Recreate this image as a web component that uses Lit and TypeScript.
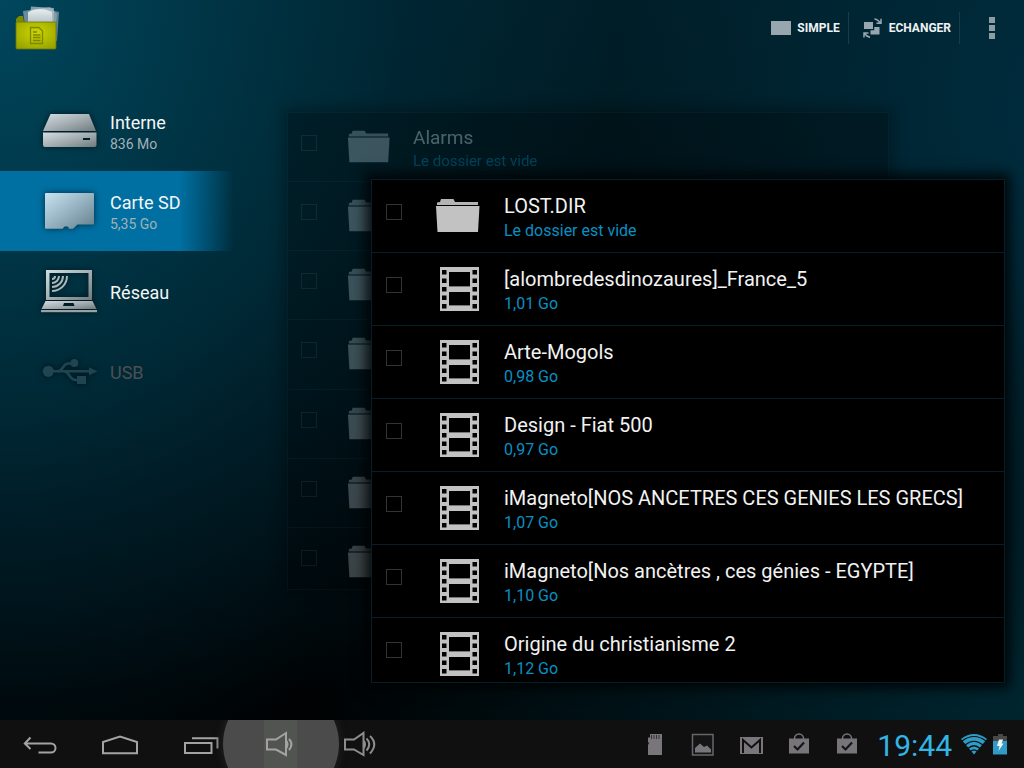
import { LitElement, html, svg, css, nothing } from "lit";
import { customElement, property, state } from "lit/decorators.js";
import { classMap } from "lit/directives/class-map.js";

interface Entry {
  kind: "folder" | "video";
  name: string;
  info: string;
}

interface Place {
  id: string;
  name: string;
  info?: string;
  disabled?: boolean;
}

const PLACES: Place[] = [
  { id: "drive", name: "Interne", info: "836 Mo" },
  { id: "card", name: "Carte SD", info: "5,35 Go" },
  { id: "network", name: "Réseau" },
  { id: "usb", name: "USB", disabled: true },
];

const CARD_FILES: Entry[] = [
  { kind: "folder", name: "LOST.DIR", info: "Le dossier est vide" },
  { kind: "video", name: "[alombredesdinozaures]_France_5", info: "1,01 Go" },
  { kind: "video", name: "Arte-Mogols", info: "0,98 Go" },
  { kind: "video", name: "Design - Fiat 500", info: "0,97 Go" },
  { kind: "video", name: "iMagneto[NOS ANCETRES CES GENIES LES GRECS]", info: "1,07 Go" },
  { kind: "video", name: "iMagneto[Nos ancètres , ces génies - EGYPTE]", info: "1,10 Go" },
  { kind: "video", name: "Origine du christianisme 2", info: "1,12 Go" },
];

const INTERNAL_FILES: Entry[] = [
  { kind: "folder", name: "Alarms", info: "Le dossier est vide" },
  ...Array.from({ length: 6 }, (): Entry => ({ kind: "folder", name: "", info: "" })),
];

const folderIcon = html`<svg class="icon" viewBox="0 0 48 48" aria-hidden="true">
  <path fill="#b4b4b4" d="M3 13V10.5L6 10L7 7H19.500L21 10H44V13Z" />
  <path fill="#c2c2c2" d="M2 14H45.500L44 40H3.500Z" />
</svg>`;

const holes = [5, 13.5, 22, 30.500, 39];
const videoIcon = html`<svg class="icon" viewBox="0 0 48 48" aria-hidden="true">
  <rect x="6" y="2" width="39" height="44" fill="#c2c2c2" />
  ${holes.map(
    (y) => svg`<rect x="8" y=${y} width="4.500" height="4.500" /><rect x="38.500" y=${y} width="4.500" height="4.500" />`
  )}
  <rect x="15" y="7" width="21" height="15" fill="#777" />
  <rect x="15" y="27" width="21" height="14" fill="#777" />
  <rect x="15" y="7" width="21" height="14" />
  <rect x="15" y="27" width="21" height="13" />
</svg>`;

const metal = svg`<defs>
  <linearGradient id="metal" x1="0" y1="0" x2="1" y2="1">
    <stop offset="0" stop-color="#d3dde1" />
    <stop offset="0.500" stop-color="#a5afb3" />
    <stop offset="1" stop-color="#6f7a7e" />
  </linearGradient>
  <linearGradient id="glass" x1="0" y1="0" x2="1" y2="1">
    <stop offset="0" stop-color="#c8e2f0" />
    <stop offset="0.500" stop-color="#97b3c1" />
    <stop offset="1" stop-color="#647f8c" />
  </linearGradient>
</defs>`;

const placeIcons: Record<string, unknown> = {
  drive: html`<svg class="icon" viewBox="0 0 58 48" aria-hidden="true">
    ${metal}
    <path fill="url(#metal)" d="M10.500 7H49L56 24H3Z" />
    <path fill="url(#metal)" fill-rule="evenodd" d="M3 25.500H56.500V38Q56.500 40 54.500 40H5Q3 40 3 38ZM43 31V33H50V31Z" />
  </svg>`,
  card: html`<svg class="icon" viewBox="0 0 58 48" aria-hidden="true">
    ${metal}
    <path fill="url(#glass)" d="M6 6H53Q54 6 54 7V36.500Q54 37.500 53 37.500H37.500L33 41.800H29L28 39.500H24.500L22.500 41.800H6Q5 41.800 5 40.800V7Q5 6 6 6Z" />
  </svg>`,
  network: html`<svg class="icon" viewBox="0 0 58 48" aria-hidden="true">
    ${metal}
    <path fill="url(#metal)" fill-rule="evenodd" d="M6 3H52V33H6ZM9.500 6V30H48.500V6Z" />
    <path fill="url(#metal)" fill-rule="evenodd" d="M5.500 34H52.500L56.500 42H1.500ZM24 36L23 39H34.500L33.500 36Z" />
    <rect x="1" y="43" width="56" height="2.200" fill="#98a3a7" />
    <g fill="none" stroke="#aab6ba" stroke-width="2">
      <path d="M27 9A15 15 0 0 1 12 24" /><path d="M23 9A11 11 0 0 1 12 20" />
      <path d="M19 9A7 7 0 0 1 12 16" /><path d="M15 9A3 3 0 0 1 12 12" />
    </g>
  </svg>`,
  usb: html`<svg class="icon" viewBox="0 0 58 48" aria-hidden="true">
    <g fill="#1f4452" stroke="none">
      <circle cx="8.300" cy="24.300" r="5.600" /><circle cx="34.300" cy="16" r="4" />
      <rect x="37" y="29" width="9" height="8" /><path d="M49 20.300L57.500 24.300L49 28.300Z" />
    </g>
    <g fill="none" stroke="#1f4452" stroke-width="2.600">
      <path d="M10 24.300H50" /><path d="M18 24.300C23 24 23 16.500 28 16.500H33" />
      <path d="M24 24.300C30 25 29 33 36 33H38" />
    </g>
  </svg>`,
};

/** A list of files shown as a floating sheet. */
@customElement("file-panel")
export class FilePanel extends LitElement {
  @property({ attribute: false }) entries: Entry[] = [];
  @property() label = "";
  @property({ type: Boolean, reflect: true }) receded = false;

  static styles = css`
    :host {
      display: block;
      min-width: 0;
      min-height: 0;
      box-sizing: border-box;
      border: 1px solid #061e28;
      background: #000;
      box-shadow: 0 0 12px 5px rgba(0, 0, 0, 0.85);
      overflow: hidden;
      --row: 73px;
      --icon: 48px;
    }
    :host([receded]) {
      opacity: 0.3;
      --icon: 46px;
    }
    .list {
      list-style: none;
      margin: 0;
      padding: 0;
      display: grid;
      grid-auto-rows: var(--row);
    }
    :host([receded]) .list {
      height: calc(100% + 8px);
      grid-auto-rows: 1fr;
    }
    .row {
      display: flex;
      align-items: center;
      box-sizing: border-box;
      min-width: 0;
      padding-left: 14px;
      border-bottom: 1px solid #061e28;
    }
    :host([receded]) .row {
      padding-left: 13px;
    }
    .tick {
      appearance: none;
      flex: none;
      box-sizing: border-box;
      width: 16px;
      height: 16px;
      margin: 0 32px 8px 0;
      border: 1px solid #333;
      background: transparent;
    }
    :host([receded]) .tick {
      margin-right: 29px;
    }
    .tick:checked {
      background: #0099cc;
    }
    .entry {
      display: flex;
      align-items: center;
      gap: 22px;
      min-width: 0;
    }
    :host([receded]) .entry {
      gap: 21px;
    }
    .icon {
      flex: none;
      width: var(--icon);
      height: var(--icon);
    }
    .text {
      display: grid;
      gap: 1px;
      min-width: 0;
      padding-top: 3px;
      white-space: nowrap;
    }
    .name {
      font-size: 20px;
      line-height: 26px;
      color: #f2f2f2;
      overflow: hidden;
      text-overflow: ellipsis;
    }
    .info {
      font-size: 16px;
      line-height: 22px;
      color: #0890c3;
    }
    :host([receded]) .text {
      padding-top: 1px;
    }
    :host([receded]) .name {
      font-size: 19px;
      line-height: 25px;
    }
    :host([receded]) .info {
      font-size: 15px;
      line-height: 20px;
    }
  `;

  render() {
    return html`<ul class="list" aria-label=${this.label}>
      ${this.entries.map(
        (entry, i) => html`<li class="row">
          <input class="tick" type="checkbox" id="e${i}" aria-label=${entry.name || "Dossier"} />
          <label class="entry" for="e${i}">
            ${entry.kind === "folder" ? folderIcon : videoIcon}
            <span class="text">
              <span class="name">${entry.name}</span>
              <span class="info">${entry.info}</span>
            </span>
          </label>
        </li>`
      )}
    </ul>`;
  }
}

/** The system bar with navigation keys, notifications and clock. */
@customElement("system-bar")
export class SystemBar extends LitElement {
  static styles = css`
    :host {
      display: flex;
      justify-content: space-between;
      height: 48px;
      background: #101010;
      overflow: hidden;
    }
    .keys,
    .status {
      display: flex;
      align-items: center;
    }
    .status {
      padding-right: 16px;
    }
    .key {
      position: relative;
      width: 80px;
      height: 48px;
      padding: 3px 0 0;
      border: 0;
      background: none;
      display: grid;
      place-items: center;
    }
    .pressed::before {
      content: "";
      position: absolute;
      width: 116px;
      height: 116px;
      left: -17px;
      top: -34px;
      border-radius: 50%;
      background: linear-gradient(to right, #4b4b4b 41px, #525451 41px 74px, #4b4b4b 74px);
      box-shadow: 0 0 6px 3px #1b1d1a;
    }
    .key svg {
      position: relative;
      width: 40px;
      height: 32px;
      fill: none;
      stroke: #a3a3a3;
      stroke-width: 2;
    }
    .notice {
      width: 48px;
      height: 32px;
    }
    .clock {
      margin-left: 6px;
      font-size: 30px;
      line-height: 48px;
      padding-top: 3px;
      color: #33b5e5;
    }
    .wifi {
      width: 28px;
      height: 32px;
      margin-left: 8px;
    }
    .battery {
      width: 16px;
      height: 32px;
      margin-left: 4px;
    }
  `;

  private bag() {
    return html`<svg class="notice" viewBox="0 0 48 32" aria-hidden="true">
      <path d="M19.500 12V10.500A4.500 4.500 0 0 1 28.500 10.500V12" fill="none" stroke="#77757a" stroke-width="1.500" />
      <rect x="14" y="10.500" width="20" height="15" fill="#77757a" />
      <path d="M19 18L22.500 21.500L29 14.500" fill="none" stroke="#151515" stroke-width="2.200" />
    </svg>`;
  }

  render() {
    return html`
      <nav class="keys">
        <button class="key" aria-label="Retour">
          <svg viewBox="0 0 40 32">
            <path d="M5 13.500H31A4.500 4.500 0 0 1 31 22.500H18.500M10.500 7.500L4.800 13.500L10.500 19" />
          </svg>
        </button>
        <button class="key" aria-label="Accueil">
          <svg viewBox="0 0 40 32"><path d="M3 23.300V12L20 6.500L37 12V23.300Z" /></svg>
        </button>
        <button class="key" aria-label="Applications récentes">
          <svg viewBox="0 0 40 32"><path d="M5 13H31.500V23H5ZM12 8.200H37.500V18.500" /></svg>
        </button>
        <button class="key pressed" aria-label="Baisser le volume">
          <svg viewBox="0 0 40 32">
            <path d="M7 9.500H16L26 3V25L16 19.500H7Z" />
            <path d="M26.500 11Q28.500 14 26.500 18M29 9Q34 14 29 20" />
          </svg>
        </button>
        <button class="key" aria-label="Augmenter le volume">
          <svg viewBox="0 0 40 32" opacity="0.85">
            <path d="M5 9.500H14L23.500 3V25L14 19.500H5Z" />
            <path d="M24 11Q26 14 24 18M26.500 8.500Q32 14 26.500 20.500M30 6Q38.500 14 30 23.500" />
          </svg>
        </button>
      </nav>
      <div class="status">
        <svg class="notice" viewBox="0 0 48 32" aria-hidden="true">
          <path d="M19 6H31V27H17V17L18 15L17 14V9.500H19Z" fill="#78767a" />
          <path d="M20.500 7V11M23 7V11M25.500 7V11M28 7V11" stroke="#333" stroke-width="1" />
        </svg>
        <svg class="notice" viewBox="0 0 48 32" aria-hidden="true">
          <rect x="13.500" y="6.500" width="20.500" height="20.500" fill="#151515" stroke="#68666a" stroke-width="1.500" />
          <path d="M16 24.500V20L21 15.500L25 19L28 17.500L32 21.500V24.500Z" fill="#78767a" />
        </svg>
        <svg class="notice" viewBox="0 0 48 32" aria-hidden="true">
          <rect x="13" y="9" width="23" height="17" fill="#78767a" />
          <path d="M16 25V12L24.500 19.500L33 12V25" fill="none" stroke="#101010" stroke-width="2" />
        </svg>
        ${this.bag()} ${this.bag()}
        <time class="clock">19:44</time>
        <svg class="wifi" viewBox="0 0 28 32" aria-hidden="true">
          <path d="M14 26.500L1 11Q14 1 27 11Z" fill="#2e9cc6" />
          <g fill="none" stroke="#101010" stroke-width="1.200">
            <path d="M2 13Q14 4 26 13M5 17Q14 9.500 23 17M8 20.500Q14 15 20 20.500M10.500 23.500Q14 20 17.500 23.500" />
          </g>
        </svg>
        <svg class="battery" viewBox="0 0 16 32" aria-hidden="true">
          <path d="M6 6H11V8H15V13H1V8H6Z" fill="#484848" />
          <rect x="1" y="13" width="14" height="13.500" fill="#2e9cc6" />
          <path d="M7 11.500H11L9.500 15.500H11.500L6.500 23L7.500 18H5Z" fill="#f4f4f4" />
        </svg>
      </div>
    `;
  }
}

@customElement("app-root")
export class AppRoot extends LitElement {
  @state() private selected = "card";

  static styles = css`
    :host {
      display: flex;
      flex-direction: column;
      height: 100vh;
      overflow: hidden;
      font-family: Roboto, "Liberation Sans", sans-serif;
      background:
        radial-gradient(ellipse 60% 105% at 0% 0%, #00465c 0%, rgba(0, 58, 76, 0.8) 35%, rgba(0, 46, 62, 0.5) 65%, rgba(0, 40, 54, 0) 100%),
        radial-gradient(ellipse 45% 70% at 105% 15%, #002d3f 0%, rgba(0, 45, 63, 0) 100%),
        radial-gradient(ellipse 75% 45% at 105% 90%, #002833 0%, rgba(0, 31, 42, 0) 100%),
        linear-gradient(#001e28 0%, #001a22 30%, #000a0e 65%, #000203 90%);
    }
    .header {
      display: flex;
      align-items: center;
      height: 56px;
      padding: 0 12px 0 12px;
    }
    .logo {
      width: 48px;
      height: 48px;
      margin-right: auto;
    }
    .action {
      display: flex;
      align-items: center;
      height: 32px;
      gap: 6px;
      padding: 0 8px 0 14px;
      border: 0;
      border-right: 1px solid #1b3b47;
      background: none;
      font: 700 12px/16px Roboto, "Liberation Sans", sans-serif;
      color: #eef2f3;
    }
    .more {
      width: 40px;
      height: 40px;
      margin-left: 12px;
      padding: 2px 0 0;
      border: 0;
      background: none;
    }
    .main {
      flex: 1;
      min-height: 0;
      display: flex;
    }
    .places {
      flex: none;
      width: 234px;
      padding-top: 35px;
    }
    .place {
      display: flex;
      align-items: center;
      gap: 12px;
      width: 100%;
      height: 80px;
      padding: 0 0 0 40px;
      border: 0;
      background: none;
      font-family: inherit;
      text-align: left;
      color: #f4f6f7;
    }
    .place.current {
      background: linear-gradient(to right, #006fa1 0 180px, rgba(0, 111, 161, 0) 234px);
    }
    .place:disabled {
      color: #4b5053;
    }
    .place .icon {
      width: 58px;
      height: 48px;
      filter: drop-shadow(0 0 3px rgba(0, 0, 0, 0.6));
    }
    .caption {
      display: grid;
      padding-top: 3px;
    }
    .title {
      font-size: 18px;
      line-height: 22px;
    }
    .size {
      font-size: 14px;
      line-height: 20px;
      color: #a3b1b7;
    }
    .stage {
      flex: 1;
      min-width: 0;
      display: grid;
      grid-template-columns: 84px minmax(0, 1fr) 116px;
      grid-template-rows: 67px minmax(0, 1fr) 93px;
      padding: 56px 19px 37px 53px;
    }
    .back {
      grid-area: 1 / 1 / 3 / 3;
    }
    .front {
      grid-area: 2 / 2 / 4 / 4;
      z-index: 1;
    }
  `;

  render() {
    return html`
      <header class="header">
        <svg class="logo" viewBox="0 0 48 48" role="img" aria-label="Gestionnaire de fichiers">
          <defs>
            <radialGradient id="lime" cx="0.5" cy="0.4" r="0.8">
              <stop offset="0" stop-color="#cdd600" /><stop offset="1" stop-color="#8f9a00" />
            </radialGradient>
            <linearGradient id="paper" x1="0" y1="0" x2="0" y2="1">
              <stop offset="0" stop-color="#e8eef0" /><stop offset="1" stop-color="#aab9bf" />
            </linearGradient>
          </defs>
          <path d="M30 4L47 8L45 37L38 35Z" fill="#7f9aa5" opacity="0.75" />
          <path d="M11 7L38 3L45 10L42 34L14 30Z" fill="#93aab3" opacity="0.7" />
          <path d="M19 2.500L42 4L41 30H16Z" fill="#b6c6cc" opacity="0.7" />
          <path d="M16 8Q28 2 40 8V22H16Z" fill="url(#paper)" />
          <path d="M4 18V15L7 12H11L12 18Z" fill="#7d8a00" />
          <rect x="4" y="18" width="40" height="27" rx="1" fill="url(#lime)" stroke="#6d7600" stroke-width="0.800" />
          <g fill="none" stroke="#7d8700" stroke-width="1.300">
            <path d="M18.500 23.500H27L30.500 27V39.500H18.500Z" />
            <path d="M21 28H25M21 31H28.500M21 33.500H28.500M21 36.500H28.500" />
          </g>
        </svg>
        <button class="action">
          <svg width="20" height="14" aria-hidden="true"><rect width="20" height="14" fill="#98a7ad" /></svg>
          SIMPLE
        </button>
        <button class="action">
          <svg width="20" height="20" viewBox="0 0 20 20" aria-hidden="true">
            <g fill="#98a7ad">
              <rect x="1" y="4" width="9" height="7" />
              <path d="M11.200 9H16.500V16.500H7.500V12.200H11.200Z" />
            </g>
            <g fill="none" stroke="#98a7ad" stroke-width="1.500">
              <path d="M11.500 0.800Q15 1.500 17 4.500M18 0.800V5.300H13.500" />
              <path d="M7 19.300Q3.500 18.500 1.500 15.500M1 19.500V15H5.500" />
            </g>
          </svg>
          ECHANGER
        </button>
        <button class="more" aria-label="Plus d'options">
          <svg width="6" height="22" viewBox="0 0 6 22" aria-hidden="true">
            <path fill="#8d9da4" d="M0 0H6V6H0ZM0 8H6V14H0ZM0 16H6V22H0Z" />
          </svg>
        </button>
      </header>
      <main class="main">
        <nav class="places">
          ${PLACES.map(
            (p) => html`<button
              class=${classMap({ place: true, current: p.id === this.selected })}
              ?disabled=${p.disabled}
              @click=${() => (this.selected = p.id)}
            >
              ${placeIcons[p.id]}
              <span class="caption">
                <span class="title">${p.name}</span>
                ${p.info ? html`<span class="size">${p.info}</span>` : nothing}
              </span>
            </button>`
          )}
        </nav>
        <section class="stage">
          <file-panel class="back" receded label="Interne" .entries=${INTERNAL_FILES}></file-panel>
          <file-panel class="front" label="Carte SD" .entries=${CARD_FILES}></file-panel>
        </section>
      </main>
      <system-bar></system-bar>
    `;
  }
}
